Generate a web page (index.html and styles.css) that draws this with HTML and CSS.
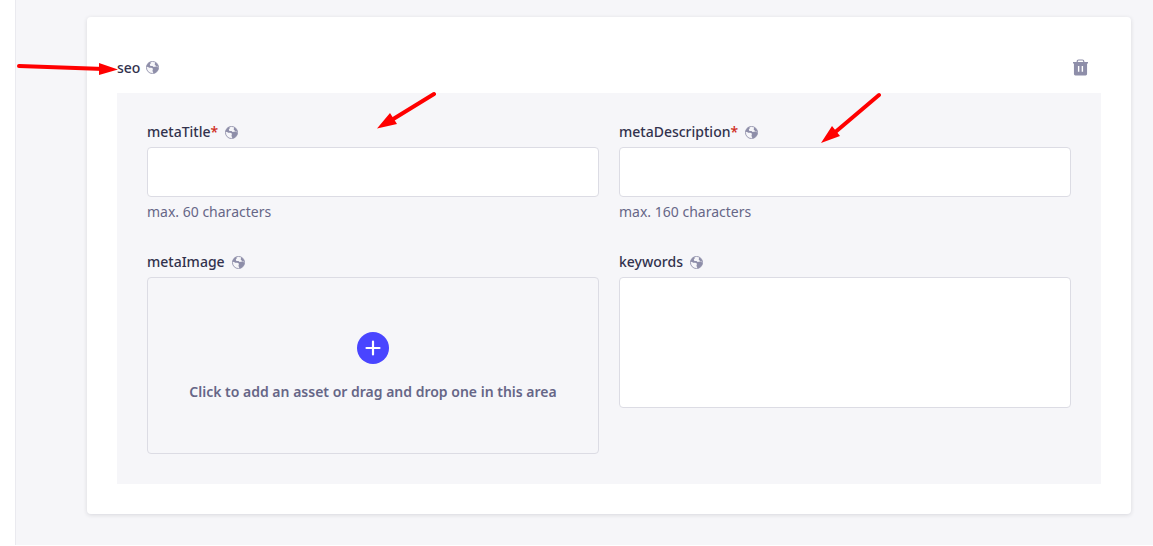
FILE: index.html
```html
<!DOCTYPE html>
<html lang="en">
<head>
<meta charset="utf-8">
<meta name="viewport" content="width=device-width, initial-scale=1">
<title>seo component</title>
<link rel="stylesheet" href="styles.css">
</head>
<body>
<svg class="sprite" aria-hidden="true">
  <symbol id="globe" viewBox="0 0 24 24">
    <circle cx="12" cy="12" r="11.200" fill="#f6f6f9" stroke="#8e8ea9" stroke-width="1.600"/>
    <path fill="#8e8ea9" d="M1 12C1 7 4 3 8 1.500L9 4 7 6l1 3 4 0 2 2 5-1 4 2c0 5-3 9-7 10.500l-3-1-1-4 1-3-3-2-4 0-3-2zM17 2.500c3 2 5 4 6 8l-4-1-3-3z"/>
  </symbol>
</svg>
<main class="page">
  <section class="card">
    <header class="card-head">
      <h1 class="label">seo <svg class="globe"><use href="#globe"/></svg></h1>
      <button class="delete" type="button" aria-label="Delete">
        <svg viewBox="0 0 16 18" width="15" height="17">
          <path d="M4.500 4V2.500q0-1.500 1.500-1.500h4q1.500 0 1.500 1.500V4" fill="none" stroke="#8e8ea9" stroke-width="1.300"/>
          <path d="M0 3.200h16v1.600h-1v11.200q0 1.500-1.500 1.500h-11q-1.500 0-1.500-1.500V4.800H0z" fill="#8e8ea9"/>
          <path d="M6 7.500v6M10 7.500v6" stroke="#fff" stroke-width="1.500"/>
        </svg>
      </button>
    </header>
    <form class="fields">
      <div class="field">
        <label class="label" for="title"><span>metaTitle<span class="required">*</span></span> <svg class="globe"><use href="#globe"/></svg></label>
        <input class="box" id="title" type="text">
        <p class="hint">max. 60 characters</p>
      </div>
      <div class="field">
        <label class="label" for="description"><span>metaDescription<span class="required">*</span></span> <svg class="globe"><use href="#globe"/></svg></label>
        <input class="box" id="description" type="text">
        <p class="hint">max. 160 characters</p>
      </div>
      <div class="field">
        <label class="label" for="image">metaImage <svg class="globe"><use href="#globe"/></svg></label>
        <button class="box drop" id="image" type="button">
          <svg viewBox="0 0 32 32" width="32" height="32">
            <circle cx="16" cy="16" r="16" fill="#4945ff"/>
            <path d="M16 9.500v13M9.500 16h13" stroke="#fff" stroke-width="2.200" stroke-linecap="round"/>
          </svg>
          <span>Click to add an asset or drag and drop one in this area</span>
        </button>
      </div>
      <div class="field">
        <label class="label" for="keywords">keywords <svg class="globe"><use href="#globe"/></svg></label>
        <textarea class="box area" id="keywords"></textarea>
      </div>
    </form>
  </section>
</main>
<svg class="arrows" width="1153" height="546" aria-hidden="true">
  <g stroke="#f00" stroke-width="4" stroke-linecap="round">
    <path d="M19 66 104 69M434 94 390 121M879 95 833 134"/>
  </g>
  <path fill="#f00" d="M118 69.500 99 63v12zM377 128.500 390 113l7 11zM821 143 832 126l8 10z"/>
</svg>
</body>
</html>
```
FILE: styles.css
```css
* {
  box-sizing: border-box;
}

body {
  margin: 0;
  padding: 0 0 1px 15px;
  background: #fff;
  color: #32324d;
  font: 14px/20px "Noto Sans", sans-serif;
}

.sprite {
  position: absolute;
  width: 0;
  height: 0;
}

.page {
  min-height: calc(100vh - 1px);
  padding: 17px 22px 30px 71px;
  border-left: 1px solid #eaeaef;
  background: #f6f6f9;
}

.card {
  padding: 39px 30px 30px;
  border-radius: 4px;
  background: #fff;
  box-shadow: 0 1px 4px rgba(33, 33, 52, 0.14);
}

.card-head {
  display: flex;
  align-items: center;
  justify-content: space-between;
  padding-bottom: 14px;
}

.label {
  display: flex;
  align-items: center;
  gap: 7px;
  margin: 0;
  font-size: 14px;
  font-weight: 500;
  line-height: 20px;
}

.card-head .label {
  gap: 6px;
}

.globe {
  width: 13px;
  height: 13px;
}

.required {
  color: #d02b20;
}

.delete {
  display: flex;
  margin-right: 13px;
  padding: 3px 0;
  border: 0;
  background: none;
}

.fields {
  display: grid;
  grid-template-columns: 1fr 1fr;
  gap: 30px 20px;
  padding: 29px 30px 30px;
  background: #f6f6f9;
}

.field {
  display: flex;
  flex-direction: column;
  gap: 5px;
  min-width: 0;
}

.box {
  width: 100%;
  height: 50px;
  padding: 0 16px;
  border: 1px solid #dcdce4;
  border-radius: 4px;
  background: #fff;
  color: inherit;
  font: inherit;
}

.area {
  height: 131px;
  padding: 12px 16px;
  resize: none;
}

.drop {
  display: flex;
  flex-direction: column;
  align-items: center;
  justify-content: center;
  gap: 18px;
  height: 177px;
  padding-top: 2px;
  background: #f6f6f9;
  color: #666687;
  font-weight: 600;
}

.hint {
  margin: 0;
  color: #666687;
}

.arrows {
  position: absolute;
  top: 0;
  left: 0;
  pointer-events: none;
}
```
